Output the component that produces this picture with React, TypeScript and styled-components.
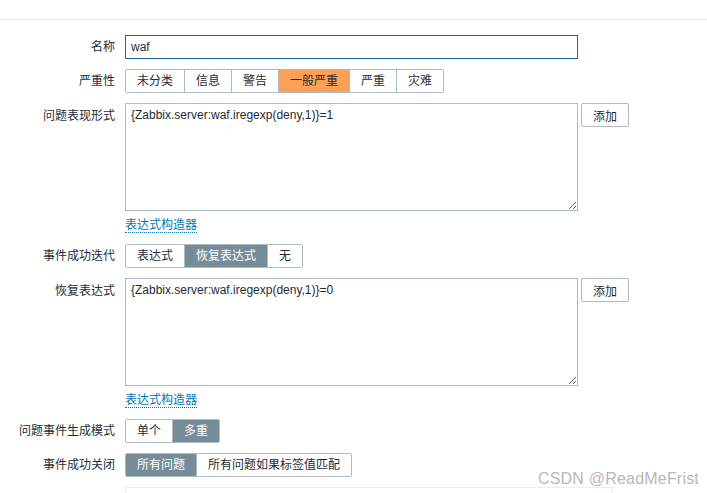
import styled, { createGlobalStyle } from 'styled-components'

const GlobalStyle = createGlobalStyle`
  body {
    margin: 0;
    background: #fff;
    font-family: 'Liberation Sans', Arial, 'Noto Sans CJK SC', sans-serif;
    font-size: 12px;
    color: #1f2c33;
  }
`

const Page = styled.div`
  position: relative;
  height: 493px;
  overflow: hidden;
`

const TopBar = styled.div`
  height: 19px;
  border-bottom: 1px solid #ebeef0;
`

const Form = styled.div`
  display: grid;
  grid-template-columns: 115px 1fr;
  column-gap: 10px;
  row-gap: 10px;
  padding-top: 15px;
`

const Label = styled.div<{ $top?: boolean }>`
  text-align: right;
  line-height: 24px;
  white-space: nowrap;
  align-self: ${(p) => (p.$top ? 'start' : 'center')};
  padding-top: ${(p) => (p.$top ? '1px' : '0')};
`

const Field = styled.div`
  display: flex;
  flex-direction: column;
  align-items: flex-start;
`

const TextInput = styled.input`
  box-sizing: border-box;
  width: 453px;
  height: 24px;
  border: 1px solid #1f65a6;
  padding: 0 5px;
  font: inherit;
  color: #1f2c33;
  outline: none;
`

const Segments = styled.div`
  display: flex;
  border: 1px solid #acbbc2;
  border-radius: 2px;
  overflow: hidden;
`

const Segment = styled.div<{ $on?: boolean; $tone?: 'grey' | 'orange' }>`
  height: 22px;
  line-height: 22px;
  padding: 0 11px;
  white-space: nowrap;
  & + & {
    border-left: 1px solid #acbbc2;
  }
  background: ${(p) =>
    !p.$on ? '#fff' : p.$tone === 'orange' ? '#ffa059' : '#768d99'};
  color: ${(p) => (p.$on && p.$tone !== 'orange' ? '#fff' : '#1f2c33')};
`

const ExprRow = styled.div`
  display: flex;
  gap: 3px;
  align-items: flex-start;
`

const ExprArea = styled.textarea`
  box-sizing: border-box;
  width: 453px;
  height: 108px;
  margin: 0;
  border: 1px solid #acbbc2;
  padding: 4px 5px;
  font: inherit;
  color: #1f2c33;
  outline: none;
  resize: both;
  display: block;
`

const AddButton = styled.button`
  box-sizing: border-box;
  width: 48px;
  height: 24px;
  margin: 0;
  border: 1px solid #acbbc2;
  border-radius: 2px;
  background: #fff;
  font: inherit;
  color: #1f2c33;
  padding: 0;
`

const LinkLine = styled.div`
  box-sizing: border-box;
  height: 23px;
  padding-top: 7px;
`

const Link = styled.span`
  color: #0275b8;
  border-bottom: 1px dotted #0275b8;
  line-height: 14px;
  display: inline-block;
`

const TagBox = styled.div`
  width: 486px;
  height: 20px;
  border: 1px solid #ebeef0;
  border-bottom: none;
`

const Watermark = styled.div`
  position: absolute;
  right: 8px;
  top: 470px;
  font-size: 16px;
  color: #b8b8b8;
  letter-spacing: 0.2px;
`

function SegmentGroup({ items, active, tone }: { items: string[]; active: number; tone?: 'grey' | 'orange' }) {
  return (
    <Segments>
      {items.map((t, i) => (
        <Segment key={t} $on={i === active} $tone={tone}>
          {t}
        </Segment>
      ))}
    </Segments>
  )
}

function Expression({ value }: { value: string }) {
  return (
    <Field>
      <ExprRow>
        <ExprArea defaultValue={value} />
        <AddButton>添加</AddButton>
      </ExprRow>
      <LinkLine>
        <Link>表达式构造器</Link>
      </LinkLine>
    </Field>
  )
}

export default function App() {
  return (
    <Page>
      <GlobalStyle />
      <TopBar />
      <Form>
        <Label>名称</Label>
        <Field>
          <TextInput defaultValue="waf" />
        </Field>

        <Label>严重性</Label>
        <Field>
          <SegmentGroup items={['未分类', '信息', '警告', '一般严重', '严重', '灾难']} active={3} tone="orange" />
        </Field>

        <Label $top>问题表现形式</Label>
        <Expression value="{Zabbix.server:waf.iregexp(deny,1)}=1" />

        <Label>事件成功迭代</Label>
        <Field>
          <SegmentGroup items={['表达式', '恢复表达式', '无']} active={1} />
        </Field>

        <Label $top>恢复表达式</Label>
        <Expression value="{Zabbix.server:waf.iregexp(deny,1)}=0" />

        <Label>问题事件生成模式</Label>
        <Field>
          <SegmentGroup items={['单个', '多重']} active={1} />
        </Field>

        <Label>事件成功关闭</Label>
        <Field>
          <SegmentGroup items={['所有问题', '所有问题如果标签值匹配']} active={0} />
        </Field>

        <div />
        <TagBox />
      </Form>
      <Watermark>CSDN @ReadMeFrist</Watermark>
    </Page>
  )
}
